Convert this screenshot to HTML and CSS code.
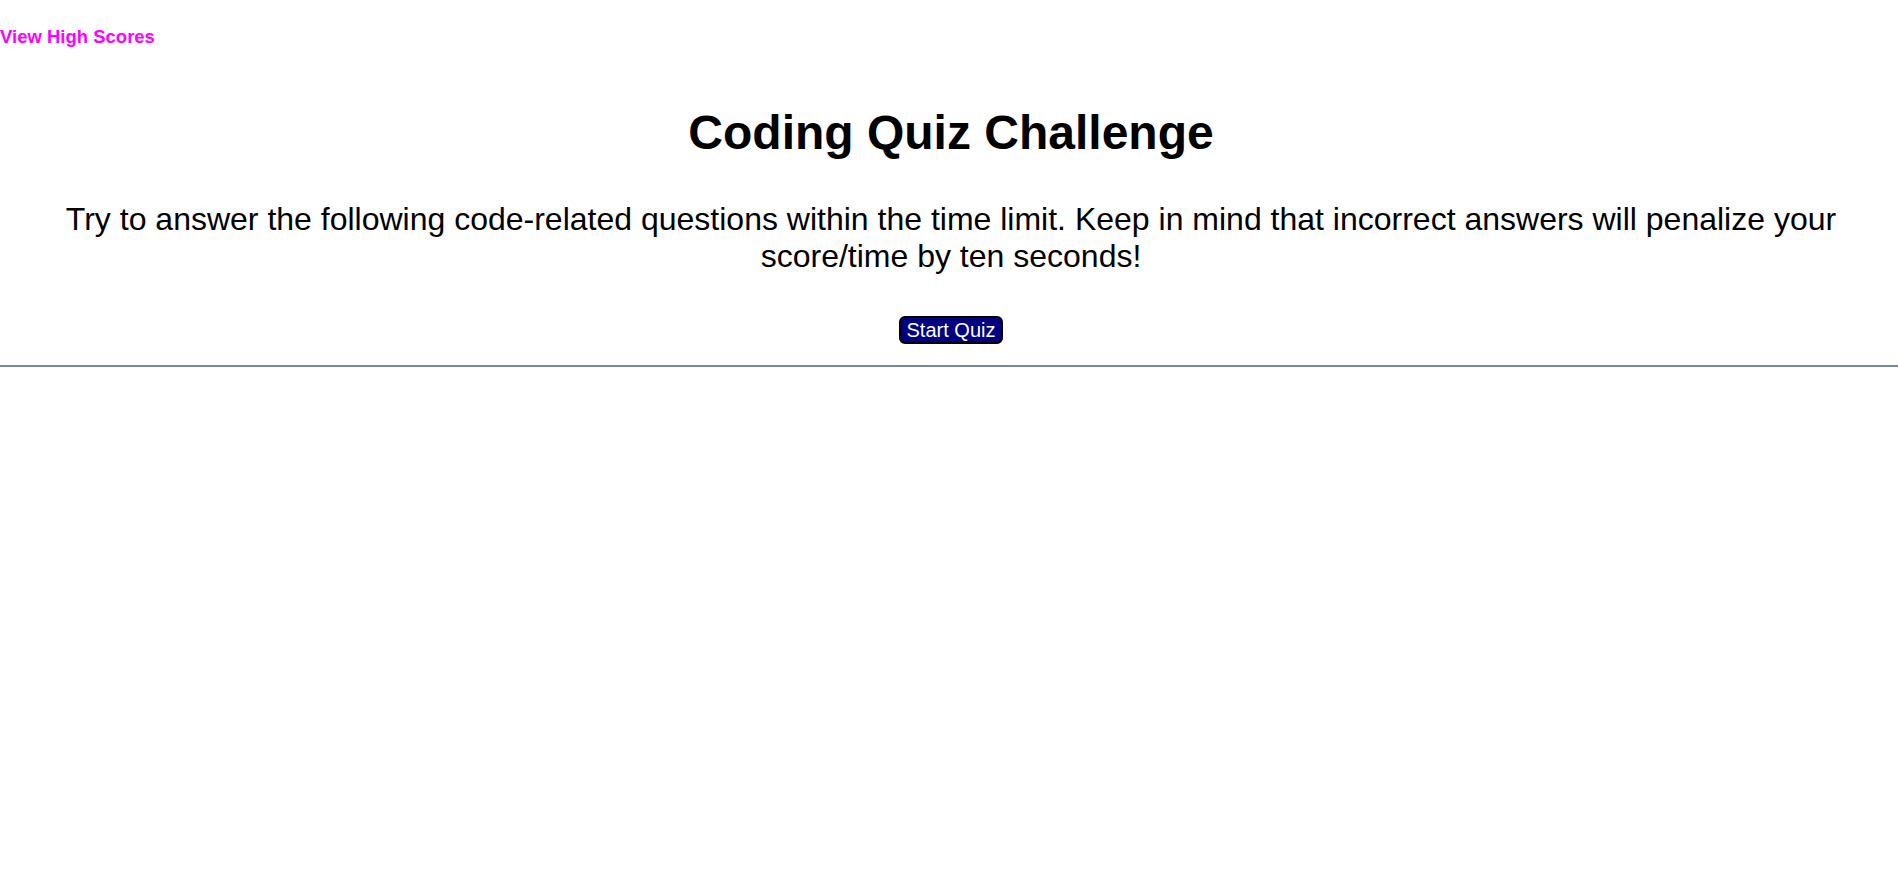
FILE: index.html
```html
<!DOCTYPE html>
<html lang="en">
<head>
<meta charset="utf-8">
<title>Coding Quiz Challenge</title>
<link rel="stylesheet" href="styles.css">
</head>
<body>
<header class="top-bar">
  <a class="high-scores" href="#">View High Scores</a>
</header>
<main class="intro">
  <h1 class="title">Coding Quiz Challenge</h1>
  <p class="lead">Try to answer the following code-related questions within the time limit. Keep in mind that incorrect answers will penalize your score/time by ten seconds!</p>
  <button class="start-btn" type="button">Start Quiz</button>
</main>
<hr class="divider">
</body>
</html>
```

FILE: styles.css
```css
html, body {
  margin: 0;
  padding: 0;
  background: #ffffff;
}

body {
  font-family: "Liberation Sans", Arial, sans-serif;
  color: #000000;
}

.top-bar {
  padding-top: 26px;
  display: flex;
}

.high-scores {
  color: #ff00ff;
  font-weight: bold;
  font-size: 18.5px;
  text-decoration: none;
  line-height: normal;
}

.intro {
  display: flex;
  flex-direction: column;
  align-items: center;
  text-align: center;
  padding-left: 4px;
}

.title {
  font-size: 48px;
  font-weight: bold;
  margin: 57px 0 0 0;
  line-height: normal;
}

.lead {
  font-size: 32px;
  margin: 41px 0 0 0;
  padding: 0 30px;
  line-height: normal;
}

.start-btn {
  margin-top: 41px;
  font-family: "Liberation Sans", Arial, sans-serif;
  font-size: 20px;
  line-height: normal;
  color: #ffffff;
  background: #000080;
  border: 2px solid #000000;
  border-radius: 6px;
  padding: 0.5px 6px;
}

.divider {
  margin: 21px 0 0 0;
  border: 0;
  height: 2px;
  background: #778899;
}
```
